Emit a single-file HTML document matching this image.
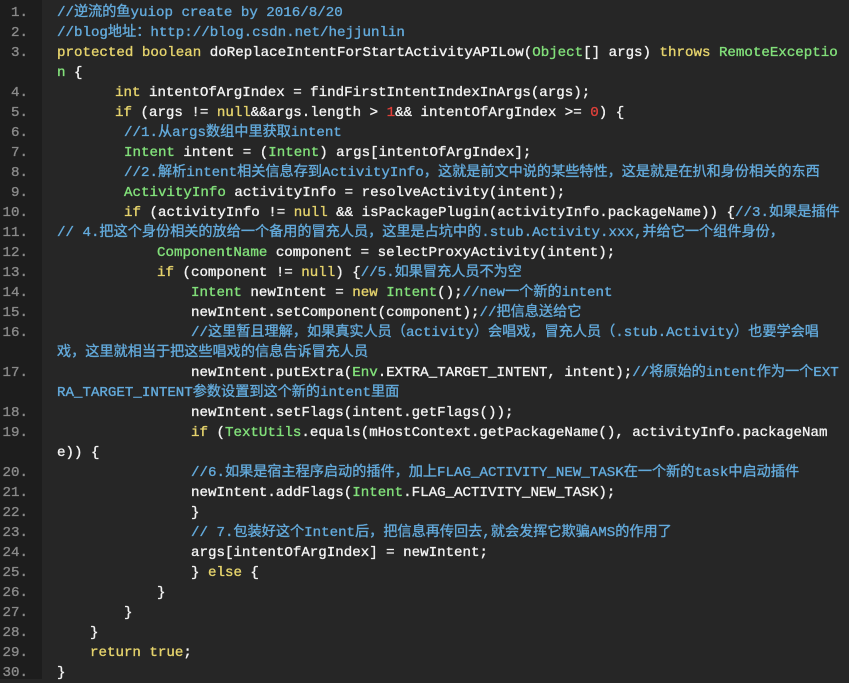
<!DOCTYPE html>
<html><head><meta charset="utf-8"><style>
html,body{margin:0;padding:0;width:849px;height:679px;overflow:hidden;background:#262626}
.g{position:absolute;left:0;top:0;width:42px;height:679px;background:#1d1d1d}
.wrap{position:absolute;left:0;top:3px;width:849px;font-family:"Liberation Mono","Noto Sans CJK SC",monospace;font-size:14.15px;line-height:20px;color:#f2f2f2;-webkit-text-stroke:0.35px}
.r{height:20px;position:relative}
.n{position:absolute;left:0;width:28px;text-align:right;color:#8a8a8a;white-space:pre}
.c{position:absolute;left:57px;white-space:pre}
.k{color:#e5d36c}.t{color:#82e07a}.m{color:#63aadb}.d{color:#e0403a}
</style></head><body>
<div class="g"></div>
<div class="wrap"><div class="r"><span class="n">1.</span><span class="c m">//逆流的鱼yuiop create by 2016/8/20</span></div><div class="r"><span class="n">2.</span><span class="c m">//blog地址：http://blog.csdn.net/hejjunlin</span></div><div class="r"><span class="n">3.</span><span class="c"><span class="k">protected boolean</span> doReplaceIntentForStartActivityAPILow(<span class="t">Object</span>[] args) <span class="k">throws</span> <span class="t">RemoteExceptio</span></span></div><div class="r"><span class="c"><span class="t">n</span> {</span></div><div class="r"><span class="n">4.</span><span class="c" style="left:115px"><span class="k">int</span> intentOfArgIndex = findFirstIntentIndexInArgs(args);</span></div><div class="r"><span class="n">5.</span><span class="c" style="left:115px"><span class="k">if</span> (args != <span class="k">null</span>&amp;&amp;args.length &gt; <span class="d">1</span>&amp;&amp; intentOfArgIndex &gt;= <span class="d">0</span>) {</span></div><div class="r"><span class="n">6.</span><span class="c m" style="left:124px">//1.从args数组中里获取intent</span></div><div class="r"><span class="n">7.</span><span class="c" style="left:124px"><span class="t">Intent</span> intent = (<span class="t">Intent</span>) args[intentOfArgIndex];</span></div><div class="r"><span class="n">8.</span><span class="c m" style="left:124px">//2.解析intent相关信息存到ActivityInfo，这就是前文中说的某些特性，这是就是在扒和身份相关的东西</span></div><div class="r"><span class="n">9.</span><span class="c" style="left:124px"><span class="t">ActivityInfo</span> activityInfo = resolveActivity(intent);</span></div><div class="r"><span class="n">10.</span><span class="c" style="left:124px"><span class="k">if</span> (activityInfo != <span class="k">null</span> &amp;&amp; isPackagePlugin(activityInfo.packageName)) {<span class="m">//3.如果是插件</span></span></div><div class="r"><span class="n">11.</span><span class="c m">// 4.把这个身份相关的放给一个备用的冒充人员，这里是占坑中的.stub.Activity.xxx,并给它一个组件身份，</span></div><div class="r"><span class="n">12.</span><span class="c" style="left:157px"><span class="t">ComponentName</span> component = selectProxyActivity(intent);</span></div><div class="r"><span class="n">13.</span><span class="c" style="left:157px"><span class="k">if</span> (component != <span class="k">null</span>) {<span class="m">//5.如果冒充人员不为空</span></span></div><div class="r"><span class="n">14.</span><span class="c" style="left:191px"><span class="t">Intent</span> newIntent = <span class="k">new</span> <span class="t">Intent</span>();<span class="m">//new一个新的intent</span></span></div><div class="r"><span class="n">15.</span><span class="c" style="left:191px">newIntent.setComponent(component);<span class="m">//把信息送给它</span></span></div><div class="r"><span class="n">16.</span><span class="c m" style="left:191px">//这里暂且理解，如果真实人员（activity）会唱戏，冒充人员（.stub.Activity）也要学会唱</span></div><div class="r"><span class="c m">戏，这里就相当于把这些唱戏的信息告诉冒充人员</span></div><div class="r"><span class="n">17.</span><span class="c" style="left:191px">newIntent.putExtra(<span class="t">Env</span>.EXTRA_TARGET_INTENT, intent);<span class="m">//将原始的intent作为一个EXT</span></span></div><div class="r"><span class="c m">RA_TARGET_INTENT参数设置到这个新的intent里面</span></div><div class="r"><span class="n">18.</span><span class="c" style="left:191px">newIntent.setFlags(intent.getFlags());</span></div><div class="r"><span class="n">19.</span><span class="c" style="left:191px"><span class="k">if</span> (<span class="t">TextUtils</span>.equals(mHostContext.getPackageName(), activityInfo.packageNam</span></div><div class="r"><span class="c">e)) {</span></div><div class="r"><span class="n">20.</span><span class="c m" style="left:191px">//6.如果是宿主程序启动的插件，加上FLAG_ACTIVITY_NEW_TASK在一个新的task中启动插件</span></div><div class="r"><span class="n">21.</span><span class="c" style="left:191px">newIntent.addFlags(<span class="t">Intent</span>.FLAG_ACTIVITY_NEW_TASK);</span></div><div class="r"><span class="n">22.</span><span class="c" style="left:191px">}</span></div><div class="r"><span class="n">23.</span><span class="c m" style="left:191px">// 7.包装好这个Intent后，把信息再传回去,就会发挥它欺骗AMS的作用了</span></div><div class="r"><span class="n">24.</span><span class="c" style="left:191px">args[intentOfArgIndex] = newIntent;</span></div><div class="r"><span class="n">25.</span><span class="c" style="left:191px">} <span class="k">else</span> {</span></div><div class="r"><span class="n">26.</span><span class="c" style="left:157px">}</span></div><div class="r"><span class="n">27.</span><span class="c" style="left:124px">}</span></div><div class="r"><span class="n">28.</span><span class="c" style="left:90px">}</span></div><div class="r"><span class="n">29.</span><span class="c" style="left:90px"><span class="k">return true</span>;</span></div><div class="r"><span class="n">30.</span><span class="c">}</span></div></div>
</body></html>
